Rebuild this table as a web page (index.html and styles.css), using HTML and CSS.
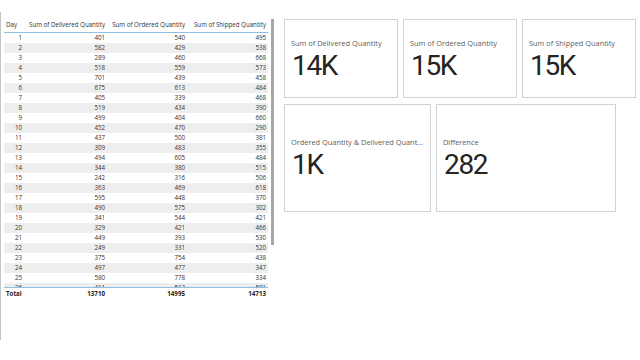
FILE: index.html
```html
<!DOCTYPE html>
<html>
<head>
<meta charset="utf-8">
<link rel="stylesheet" href="styles.css">
</head>
<body>
<div class="page">
  <div class="table-visual">
    <div class="tbl">
      <div class="row head">
        <div class="c left">Day</div>
        <div class="c">Sum of Delivered Quantity</div>
        <div class="c">Sum of Ordered Quantity</div>
        <div class="c">Sum of Shipped Quantity</div>
      </div>
      <div class="body">
        <div class="row"><div class="c">1</div><div class="c">401</div><div class="c">540</div><div class="c">495</div></div>
        <div class="row"><div class="c">2</div><div class="c">582</div><div class="c">429</div><div class="c">538</div></div>
        <div class="row"><div class="c">3</div><div class="c">289</div><div class="c">460</div><div class="c">668</div></div>
        <div class="row"><div class="c">4</div><div class="c">518</div><div class="c">559</div><div class="c">573</div></div>
        <div class="row"><div class="c">5</div><div class="c">701</div><div class="c">439</div><div class="c">458</div></div>
        <div class="row"><div class="c">6</div><div class="c">675</div><div class="c">613</div><div class="c">484</div></div>
        <div class="row"><div class="c">7</div><div class="c">405</div><div class="c">339</div><div class="c">468</div></div>
        <div class="row"><div class="c">8</div><div class="c">519</div><div class="c">434</div><div class="c">390</div></div>
        <div class="row"><div class="c">9</div><div class="c">499</div><div class="c">404</div><div class="c">660</div></div>
        <div class="row"><div class="c">10</div><div class="c">452</div><div class="c">470</div><div class="c">290</div></div>
        <div class="row"><div class="c">11</div><div class="c">437</div><div class="c">500</div><div class="c">381</div></div>
        <div class="row"><div class="c">12</div><div class="c">309</div><div class="c">483</div><div class="c">355</div></div>
        <div class="row"><div class="c">13</div><div class="c">494</div><div class="c">605</div><div class="c">484</div></div>
        <div class="row"><div class="c">14</div><div class="c">344</div><div class="c">380</div><div class="c">515</div></div>
        <div class="row"><div class="c">15</div><div class="c">242</div><div class="c">316</div><div class="c">506</div></div>
        <div class="row"><div class="c">16</div><div class="c">363</div><div class="c">469</div><div class="c">618</div></div>
        <div class="row"><div class="c">17</div><div class="c">595</div><div class="c">448</div><div class="c">370</div></div>
        <div class="row"><div class="c">18</div><div class="c">490</div><div class="c">575</div><div class="c">302</div></div>
        <div class="row"><div class="c">19</div><div class="c">341</div><div class="c">544</div><div class="c">421</div></div>
        <div class="row"><div class="c">20</div><div class="c">329</div><div class="c">421</div><div class="c">466</div></div>
        <div class="row"><div class="c">21</div><div class="c">449</div><div class="c">393</div><div class="c">530</div></div>
        <div class="row"><div class="c">22</div><div class="c">249</div><div class="c">331</div><div class="c">520</div></div>
        <div class="row"><div class="c">23</div><div class="c">375</div><div class="c">754</div><div class="c">438</div></div>
        <div class="row"><div class="c">24</div><div class="c">497</div><div class="c">477</div><div class="c">347</div></div>
        <div class="row"><div class="c">25</div><div class="c">580</div><div class="c">778</div><div class="c">334</div></div>
        <div class="row"><div class="c">26</div><div class="c">411</div><div class="c">513</div><div class="c">501</div></div>
      </div>
      <div class="row total">
        <div class="c left">Total</div>
        <div class="c">13710</div>
        <div class="c">14995</div>
        <div class="c">14713</div>
      </div>
    </div>
    <div class="scroll"></div>
  </div>
  <div class="cards">
    <div class="card-row top">
      <div class="card w114"><div class="title">Sum of Delivered Quantity</div><div class="value">14K</div></div>
      <div class="card w114"><div class="title">Sum of Ordered Quantity</div><div class="value">15K</div></div>
      <div class="card w114"><div class="title">Sum of Shipped Quantity</div><div class="value">15K</div></div>
    </div>
    <div class="card-row bottom">
      <div class="card w147"><div class="title">Ordered Quantity &amp; Delivered Quantity Difference</div><div class="value">1K</div></div>
      <div class="card w180"><div class="title">Difference</div><div class="value">282</div></div>
    </div>
  </div>
</div>
</body>
</html>
```

FILE: styles.css
```css
html, body {
  margin: 0;
  padding: 0;
  background: #ffffff;
}
body {
  font-family: "Open Sans", "Noto Sans", sans-serif;
  color: #252423;
}
.page {
  display: flex;
  width: 640px;
  height: 360px;
  overflow: hidden;
}
.table-visual {
  display: flex;
  align-items: flex-start;
  width: 275px;
  height: 328px;
  margin-top: 12px;
  border-left: 1px solid #c4c4c4;
  box-sizing: border-box;
  padding-top: 5px;
}
.tbl {
  width: 264px;
  margin-left: 3px;
  display: flex;
  flex-direction: column;
}
.row {
  display: grid;
  grid-template-columns: 20px 83px 80px 81px;
  height: 10px;
  align-items: center;
  font-size: 6.2px;
  line-height: 10px;
  color: #333333;
}
.row .c {
  text-align: right;
  padding-right: 2px;
  white-space: nowrap;
}
.row .c.left {
  text-align: left;
  padding-left: 2px;
}
.row.head {
  height: 15px;
  border-bottom: 1px solid #8ec0e6;
}
.body {
  height: 254px;
  overflow: hidden;
}
.body .row:nth-child(even) {
  background: #eeeeee;
}
.row.total {
  border-top: 1px solid #8ec0e6;
  height: 11px;
  font-weight: 700;
  color: #252423;
}
.scroll {
  width: 3px;
  height: 226px;
  margin-left: 3px;
  margin-top: 2px;
  background: #a8a8a8;
}
.cards {
  margin-left: 9px;
  padding-top: 19px;
  display: flex;
  flex-direction: column;
  gap: 6px;
}
.card-row {
  display: flex;
  gap: 5px;
}
.card-row.top .card {
  height: 79px;
}
.card-row.bottom .card {
  height: 108px;
}
.card {
  box-sizing: border-box;
  border: 1px solid #d2d2d2;
  display: flex;
  flex-direction: column;
  justify-content: center;
  padding: 0 6px;
}
.w114 { width: 114px; }
.w147 { width: 147px; }
.w180 { width: 180px; }
.title {
  font-size: 7.4px;
  line-height: 10px;
  color: #605e5c;
  white-space: nowrap;
  overflow: hidden;
  text-overflow: ellipsis;
}
.value {
  font-family: Roboto, "Liberation Sans", sans-serif;
  font-size: 28px;
  line-height: 28px;
  margin-top: 4px;
  letter-spacing: -1.3px;
  padding-left: 1px;
  color: #252423;
}
```
